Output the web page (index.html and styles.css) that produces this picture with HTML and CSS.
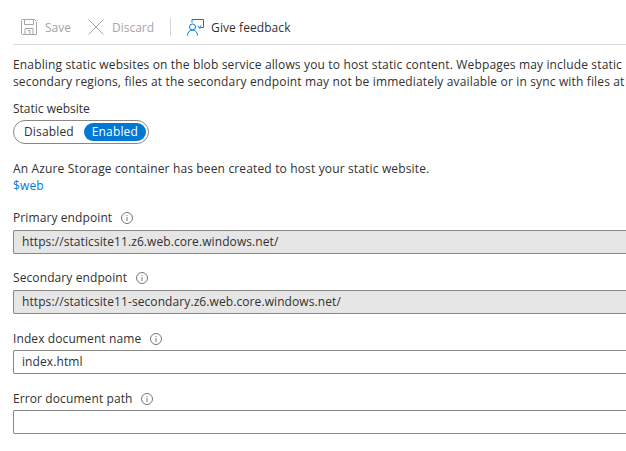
FILE: index.html
```html
<!DOCTYPE html>
<html>
<head>
<meta charset="utf-8">
	<title>Static website</title>
	<link rel="stylesheet" href="styles.css">
</head>
<body>
	<div class="container">
		<div class="toolbar">
			<span class="cmd disabled">
				<svg class="icon" width="16" height="16" viewBox="0 0 16 16" fill="none" stroke="#a6a6a6"><path d="M1.5.5h12l2 2v13h-14a1 1 0 0 1-1-1v-13a1 1 0 0 1 1-1z"/><path d="M3.500.5v5h9v-5M4 15.500v-6h8v6M7 11.500h2v4"/></svg>
				Save
			</span>
			<span class="cmd disabled discard">
				<svg class="icon" width="16" height="16" viewBox="0 0 16 16" fill="none" stroke="#a6a6a6"><path d="M.5.5l15 15M15.500.5l-15 15"/></svg>
				Discard
			</span>
			<span class="divider"></span>
			<span class="cmd feedback">
				<svg class="icon" width="17" height="17" viewBox="0 0 17 17" fill="none" stroke="#0078d4"><path d="M5 3.500v-3h11.500v8h-3l-1 1.500"/><circle cx="5.500" cy="8" r="3"/><path d="M.5 16.500c0-3 2-5.500 5-5.500s5 2.500 5 5.500M10.500 7l2 1.500 1.500-2"/></svg>
				Give feedback
			</span>
		</div>
		<div class="content">
			<p class="intro">Enabling static websites on the blob service allows you to host static content. Webpages may include static<br>secondary regions, files at the secondary endpoint may not be immediately available or in sync with files at</p>
			<div class="toggleLabel">Static website</div>
			<div class="toggle">
				<span class="toggleItem">Disabled</span>
				<span class="toggleItem on">Enabled</span>
			</div>
			<p class="note">An Azure Storage container has been created to host your static website.<br><a href="#">$web</a></p>
			<div class="field">
				<label>Primary endpoint <svg class="info" width="12" height="12" viewBox="0 0 12 12" fill="none" stroke="#797775"><circle cx="6" cy="6" r="5.500"/><path d="M6 5v4M6 3v1"/></svg></label>
				<div class="input readonly">https://staticsite11.z6.web.core.windows.net/</div>
			</div>
			<div class="field">
				<label>Secondary endpoint <svg class="info" width="12" height="12" viewBox="0 0 12 12" fill="none" stroke="#797775"><circle cx="6" cy="6" r="5.500"/><path d="M6 5v4M6 3v1"/></svg></label>
				<div class="input readonly">https://staticsite11-secondary.z6.web.core.windows.net/</div>
			</div>
			<div class="field editable">
				<label>Index document name <svg class="info" width="12" height="12" viewBox="0 0 12 12" fill="none" stroke="#797775"><circle cx="6" cy="6" r="5.500"/><path d="M6 5v4M6 3v1"/></svg></label>
				<div class="input">index.html</div>
			</div>
			<div class="field editable">
				<label class="short">Error document path <svg class="info" width="12" height="12" viewBox="0 0 12 12" fill="none" stroke="#797775"><circle cx="6" cy="6" r="5.500"/><path d="M6 5v4M6 3v1"/></svg></label>
				<div class="input"></div>
			</div>
		</div>
	</div>
</body>
</html>
```

FILE: styles.css
```css
body{
	margin: 0px;
	padding: 0px;
	background-color: #fff;
	font-family: "Open Sans", "Noto Sans", sans-serif;
	font-size: 12px;
	color: #323130;
}
.container{
	padding-left: 13px;
}
.toolbar{
	display: flex;
	align-items: center;
	height: 34px;
	border-bottom: 1px solid #d6d6d6;
	padding-left: 8px;
	padding-top: 10px;
}
.cmd{
	display: flex;
	align-items: center;
	gap: 8px;
	margin-right: 16px;
}
.cmd.disabled{
	color: #a6a6a6;
}
.discard{
	margin-left: 1px;
}
.feedback{
	gap: 7px;
	letter-spacing: 0.07px;
}
.divider{
	width: 1px;
	height: 18px;
	background-color: #d6d6d6;
	margin-right: 16px;
}
.content{
	padding-top: 11px;
}
p{
	margin: 0px;
	line-height: 17px;
	white-space: nowrap;
	letter-spacing: 0.15px;
}
.toggleLabel{
	margin-top: 10px;
	line-height: 17px;
}
.toggle{
	display: inline-flex;
	align-items: center;
	height: 24px;
	box-sizing: border-box;
	border: 1px solid #8a8886;
	border-radius: 12px;
	padding: 2px;
	margin-top: 3px;
	vertical-align: top;
}
.toggleItem{
	padding: 0px 8px;
	line-height: 18px;
	letter-spacing: 0.15px;
}
.toggleItem.on{
	background-color: #0078d4;
	color: #fff;
	border-radius: 9px;
	margin-left: 2px;
}
.note{
	margin-top: 16px;
}
a{
	color: #0078d4;
	text-decoration: none;
}
.field{
	margin-top: 15px;
}
label{
	display: flex;
	align-items: center;
	gap: 9px;
	line-height: 17px;
	letter-spacing: 0.1px;
}
label.short{
	gap: 8px;
}
.input{
	height: 24px;
	box-sizing: border-box;
	border: 1px solid #8a8886;
	border-right: 0px;
	border-radius: 2px 0px 0px 2px;
	padding-left: 8px;
	line-height: 22px;
	margin-top: 4px;
	letter-spacing: 0.09px;
}
.input.readonly{
	background-color: #e6e6e6;
}
.editable{
	margin-top: 16px;
}
.editable .input{
	margin-top: 3px;
}
```
